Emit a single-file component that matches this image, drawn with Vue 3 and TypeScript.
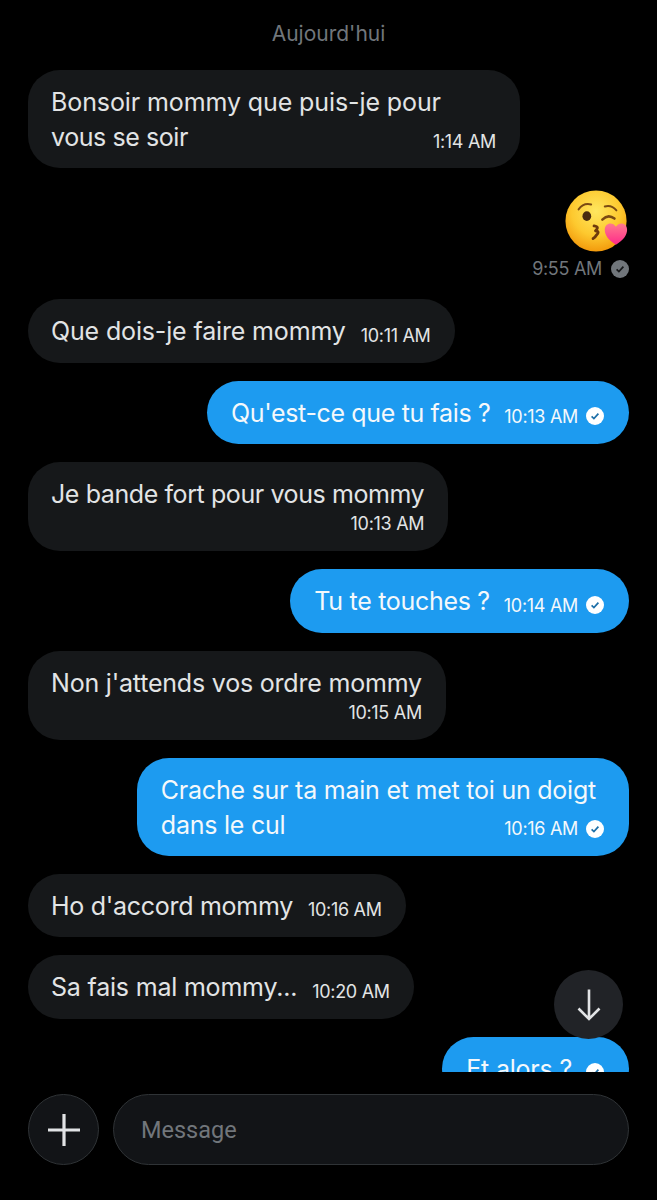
<script setup lang="ts">
interface Msg { text: string; time: string; mine: boolean; stack?: boolean; track: number }
const messages: Msg[] = [
  { text: "Que dois-je faire mommy", time: "10:11 AM", mine: false, track: -0.15 },
  { text: "Qu'est-ce que tu fais ?", time: "10:13 AM", mine: true, track: -0.36 },
  { text: "Je bande fort pour vous mommy", time: "10:13 AM", mine: false, stack: true, track: -0.41 },
  { text: "Tu te touches ?", time: "10:14 AM", mine: true, track: -0.3 },
  { text: "Non j'attends vos ordre mommy", time: "10:15 AM", mine: false, stack: true, track: -0.2 },
]
const messages2: Msg[] = [
  { text: "Ho d'accord mommy", time: "10:16 AM", mine: false, track: -0.28 },
  { text: "Sa fais mal mommy...", time: "10:20 AM", mine: false, track: -0.2 },
  { text: "Et alors ?", time: "", mine: true, track: -0.2 },
]
const spacing = (m: Msg) => ({ letterSpacing: `${m.track}px` })
</script>

<template>
  <div class="page">
    <main class="thread">
      <div class="day">Aujourd'hui</div>

      <div class="bubble theirs multi first">
        <div class="text">Bonsoir mommy que puis-je pour<br /><span class="tight">vous se soir</span></div>
        <div class="time end t1">1:14 AM</div>
      </div>

      <div class="emoji-row">
        <svg class="emoji" viewBox="0 0 68 68" width="68" height="68">
          <defs>
            <radialGradient id="face" cx="50%" cy="34%" r="66%">
              <stop offset="0" stop-color="#ffe75f" />
              <stop offset="0.6" stop-color="#fdc92f" />
              <stop offset="1" stop-color="#f39a0c" />
            </radialGradient>
            <linearGradient id="heart" x1="0" y1="0" x2="0" y2="1">
              <stop offset="0" stop-color="#ff7a8e" />
              <stop offset="1" stop-color="#ff2a8a" />
            </linearGradient>
          </defs>
          <circle cx="33" cy="33" r="31.5" fill="url(#face)" />
          <path d="M15 21q5-7 13-5" fill="none" stroke="#7a4a12" stroke-width="2" stroke-linecap="round" />
          <path d="M42 18q7-2 12 4" fill="none" stroke="#7a4a12" stroke-width="2" stroke-linecap="round" />
          <ellipse cx="23.5" cy="28" rx="4.5" ry="5" fill="#4a2c10" />
          <path d="M39.5 31.5q6-6 12.5-1" fill="none" stroke="#7a4a12" stroke-width="2.6" stroke-linecap="round" />
          <path d="M31 38q6 1 1.5 5q5 1 .5 5q-1 2-3 3" fill="none" stroke="#6e3a0c" stroke-width="3" stroke-linecap="round" stroke-linejoin="round" />
          <path d="M53.5 57.5C46 53 42 47.500 42 42c0-7.500 8.500-8.500 11.500-3c3-5.500 11.500-4.500 11.500 3c0 5.500-4 11-11.500 15.500z" fill="url(#heart)" />
        </svg>
        <div class="emoji-meta">
          <span class="time dim">9:55 AM</span>
          <svg class="check" viewBox="0 0 18 18" width="18" height="18">
            <circle cx="9" cy="9" r="9" fill="#71767b" />
            <path d="M5.6 9.4l2.3 2.2 4.5-5" fill="none" stroke="#16181a" stroke-width="1.7" />
          </svg>
        </div>
      </div>

      <template v-for="(m, i) in messages" :key="i">
        <div class="bubble" :class="[m.mine ? 'mine' : 'theirs', m.stack ? 'multi' : 'single']">
          <div class="text" :style="spacing(m)">{{ m.text }}</div>
          <div class="time" :class="{ end: m.stack }">{{ m.time }}</div>
          <svg v-if="m.mine" class="check" viewBox="0 0 18 18" width="18" height="18">
            <circle cx="9" cy="9" r="9" fill="#fff" />
            <path d="M5.6 9.4l2.3 2.2 4.5-5" fill="none" stroke="#1d6fa8" stroke-width="1.7" />
          </svg>
        </div>
      </template>

      <div class="bubble mine multi long">
        <div class="text track-long">Crache sur ta main et met toi un doigt<br />dans le cul</div>
        <div class="meta-end">
          <span class="time">10:16 AM</span>
          <svg class="check" viewBox="0 0 18 18" width="18" height="18">
            <circle cx="9" cy="9" r="9" fill="#fff" />
            <path d="M5.6 9.4l2.3 2.2 4.5-5" fill="none" stroke="#1d6fa8" stroke-width="1.7" />
          </svg>
        </div>
      </div>

      <template v-for="(m, i) in messages2" :key="'b' + i">
        <div class="bubble single" :class="[m.mine ? 'mine' : 'theirs', { notime: !m.time }]">
          <div class="text" :style="spacing(m)">{{ m.text }}</div>
          <div v-if="m.time" class="time">{{ m.time }}</div>
          <svg v-if="m.mine" class="check" viewBox="0 0 18 18" width="18" height="18">
            <circle cx="9" cy="9" r="9" fill="#fff" />
            <path d="M5.6 9.4l2.3 2.2 4.5-5" fill="none" stroke="#1d6fa8" stroke-width="1.7" />
          </svg>
        </div>
      </template>

      <button class="scroll-down" aria-label="Bas">
        <svg viewBox="0 0 28 33" width="28" height="33">
          <path d="M14 1.500v29M3.500 20.500l10.500 10.500 10.500-10.500" fill="none" stroke="#e1e3e5" stroke-width="2.6" />
        </svg>
      </button>
    </main>

    <footer class="composer">
      <button class="plus" aria-label="Ajouter">
        <svg viewBox="0 0 34 34" width="34" height="34">
          <path d="M17 1v32M1 17h32" fill="none" stroke="#e1e3e5" stroke-width="3.2" />
        </svg>
      </button>
      <div class="input">Message</div>
    </footer>
  </div>
</template>

<style>
html, body { margin: 0; background: #000; }
</style>

<style scoped>
.page {
  width: 657px;
  height: 1200px;
  background: #000;
  display: flex;
  flex-direction: column;
  font-family: Inter, "Liberation Sans", sans-serif;
  color: #e7e9ea;
}
.thread {
  position: relative;
  height: 1072px;
  overflow: hidden;
  box-sizing: border-box;
  padding: 0 28px;
  display: flex;
  flex-direction: column;
  gap: 18px;
  flex: none;
}
.day {
  height: 52px;
  padding-top: 20px;
  box-sizing: border-box;
  text-align: center;
  font-size: 21px;
  line-height: 28px;
  color: #71767b;
  flex: none;
}
.bubble {
  flex: none;
  box-sizing: border-box;
  border-radius: 32px;
  padding: 0 24px;
  font-size: 25px;
  letter-spacing: -0.1px;
  line-height: 35px;
}
.theirs { align-self: flex-start; background: #16181a; color: #e2e4e5; padding-left: 23px; }
.mine { align-self: flex-end; background: #1d9bf0; color: #f4f8fb; padding-right: 25px; }
.tight { letter-spacing: -0.42px; }
.single {
  height: 63.5px;
  display: flex;
  align-items: center;
  gap: 14px;
}
.single.theirs { gap: 15px; }
.single .text { margin-top: 2px; }
.single .time { margin-top: 10px; }
.single .check { margin-left: -6px; margin-top: 8px; }
.notime { gap: 14px; }
.notime .check { margin-left: 0; }
.multi { padding-top: 15px; padding-bottom: 15px; }
.multi .time.end, .t1, .meta-end { text-align: right; }
.first { width: 492px; height: 98px; }
.t1 { margin-top: -25px; }
.track-long { letter-spacing: -0.23px; margin-right: 8px; }
.time {
  font-size: 18px;
  line-height: 24px;
  letter-spacing: -0.3px;
  white-space: nowrap;
}
.dim { color: #71767b; }
.emoji-row {
  flex: none;
  align-self: flex-end;
  display: flex;
  flex-direction: column;
  align-items: flex-end;
  margin-top: 3px;
  height: 92px;
}
.emoji { display: block; margin-right: -2px; }
.emoji-meta {
  display: flex;
  align-items: center;
  gap: 9px;
  margin-top: 2px;
}
.meta-end {
  display: flex;
  justify-content: flex-end;
  align-items: center;
  gap: 8px;
  margin-top: -26px;
}
.scroll-down {
  position: absolute;
  left: 554px;
  top: 970px;
  width: 69px;
  height: 69px;
  border: 0;
  padding: 0;
  border-radius: 50%;
  background: #212327;
  display: flex;
  align-items: center;
  justify-content: center;
}
.composer {
  flex: none;
  display: flex;
  gap: 14px;
  padding: 22px 28px 0;
  height: 128px;
  box-sizing: border-box;
}
.plus {
  width: 71px;
  height: 71px;
  flex: none;
  border-radius: 50%;
  background: #121417;
  border: 1.5px solid #2f3336;
  padding: 0;
  display: flex;
  align-items: center;
  justify-content: center;
  box-sizing: border-box;
}
.input {
  flex: 1;
  height: 71px;
  box-sizing: border-box;
  border: 1.5px solid #2f3336;
  border-radius: 36px;
  background: #121417;
  color: #71767b;
  font-family: Roboto, Inter, sans-serif;
  font-size: 23.5px;
  padding-left: 27px;
  display: flex;
  align-items: center;
}
</style>
